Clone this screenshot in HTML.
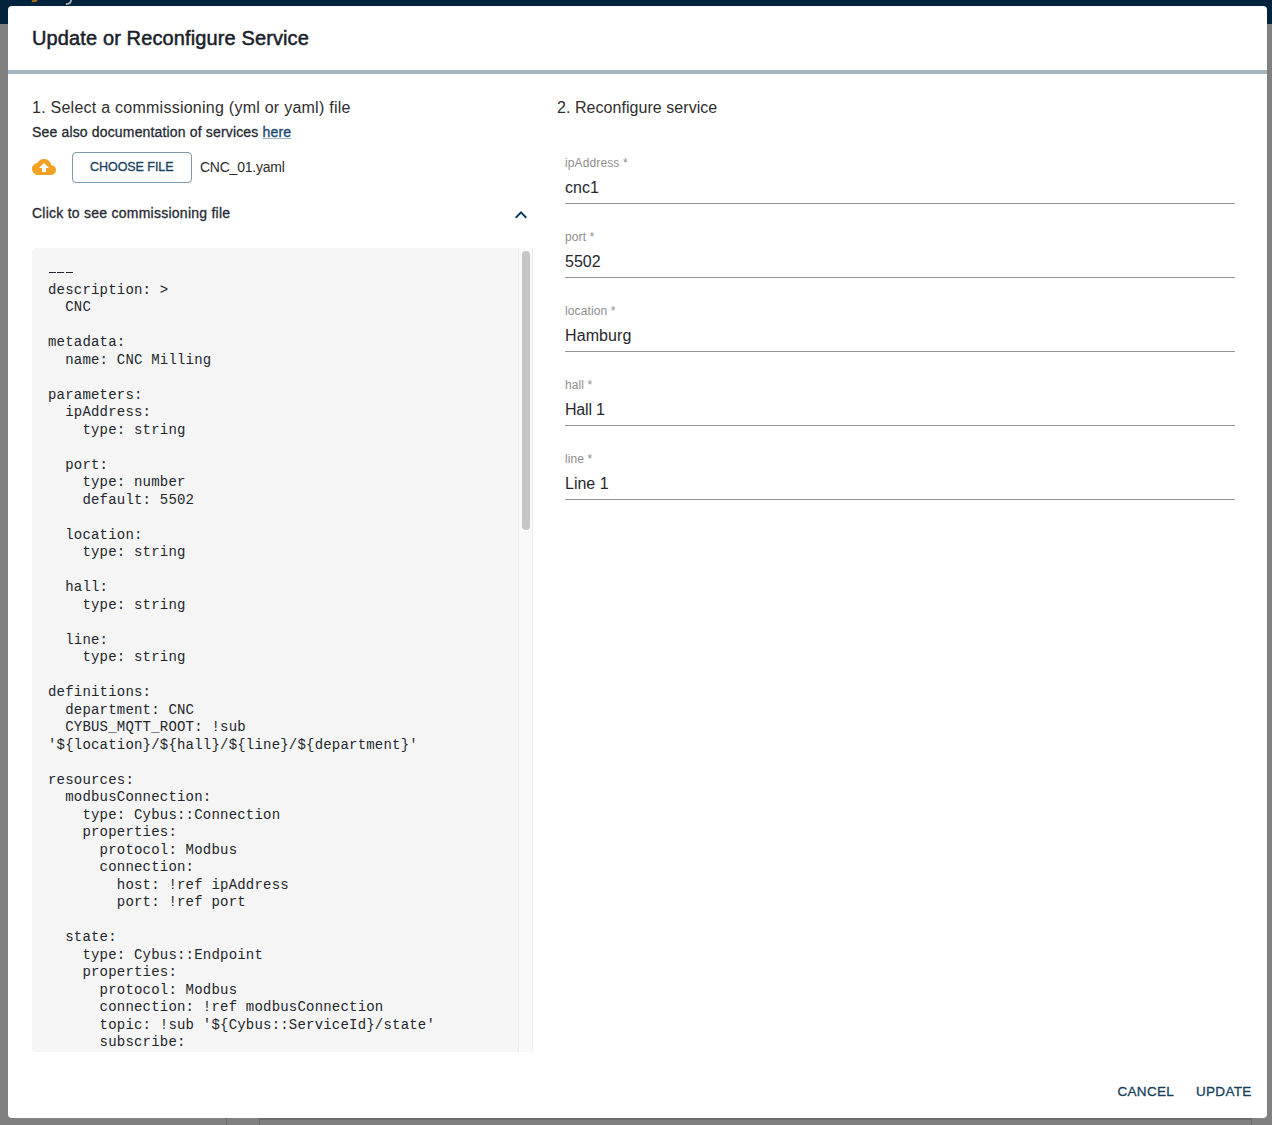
<!DOCTYPE html>
<html><head><meta charset="utf-8">
<style>
*{box-sizing:border-box;margin:0;padding:0}
html,body{width:1272px;height:1125px;overflow:hidden;background:#808080;font-family:"Liberation Sans",sans-serif}
.topbar{position:absolute;left:0;top:0;width:1272px;height:24px;background:#03233d}
.pl{position:absolute;background:#6b6b6b}
.dialog{position:absolute;left:8px;top:6px;width:1259px;height:1112px;background:#fff;border-radius:4px}
.t{position:absolute;white-space:nowrap}
.title{left:24px;top:20px;font-size:20px;color:#1a1e2b;line-height:24px;-webkit-text-stroke:0.5px #1a1e2b;letter-spacing:0.12px}
.divider{position:absolute;left:0;top:64px;width:100%;height:4px;background:#a5b5c2}
.h{font-size:16px;color:#2e2e2e;line-height:20px}
.sub{font-size:14px;color:#262a33;line-height:18px;-webkit-text-stroke:0.3px #262a33}
.sub a{color:#1c4a70;-webkit-text-stroke:0.35px #1c4a70;text-decoration:underline;text-decoration-color:#9fb3c4;text-underline-offset:1px}
.btn{position:absolute;left:64px;top:146px;width:120px;height:31px;border:1px solid #7f99ae;border-radius:4px}
.btn span{position:absolute;left:17px;top:7px;font-size:12.5px;line-height:15px;color:#173f60;-webkit-text-stroke:0.3px #173f60;white-space:nowrap;letter-spacing:-0.05px}
.fname{left:192px;top:152px;font-size:14px;color:#2b2b2b;line-height:18px;letter-spacing:-0.24px}
.code{position:absolute;left:24px;top:242px;width:501px;height:804px;background:#f5f5f5;border-radius:4px 0 0 4px;overflow:hidden}
.code pre{position:absolute;left:16px;top:16px;font-family:"Liberation Mono",monospace;font-size:14px;line-height:17.5px;color:#23262c;letter-spacing:0.2px}
.dash{position:absolute;top:24px;width:7px;height:1px;background:#23262c}
.sb{position:absolute;left:486px;top:0;width:15px;height:804px;background:#f9f9f9;border-left:1px solid #e8e8e8;border-right:1px solid #ededed}
.thumb{position:absolute;left:3px;top:3px;width:8px;height:279px;background:#c6c6c6;border-radius:4px}
.field{position:absolute;left:557px;width:670px;height:60px}
.field .lab{position:absolute;left:0;top:0;font-size:12px;color:#8e8e8e;line-height:14px;white-space:nowrap;letter-spacing:0.12px}
.field .val{position:absolute;left:0;top:22px;font-size:16px;color:#26282d;line-height:20px;white-space:nowrap}
.field .ul{position:absolute;left:0;top:47px;width:670px;height:1px;background:#949494}
.act{top:1078.4px;font-size:13.5px;color:#173f60;-webkit-text-stroke:0.3px #173f60;letter-spacing:0.3px;line-height:16px}
</style></head><body>
<div class="topbar"></div>
<div style="position:absolute;left:32px;top:0;width:5px;height:2px;background:#a86a10;transform:skewX(-30deg)"></div>
<div style="position:absolute;left:66px;top:0;width:6px;height:5px;border-right:2px solid #a8a8a8;border-bottom:2px solid #a8a8a8;border-radius:0 0 5px 0"></div>
<div class="pl" style="left:226px;top:1118px;width:1px;height:7px"></div>
<div class="pl" style="left:259px;top:1118px;width:1px;height:7px"></div>
<div class="pl" style="left:259px;top:1118px;width:993px;height:2px"></div>
<div class="pl" style="left:1251px;top:1118px;width:1px;height:7px"></div>
<div class="dialog">
  <div class="t title">Update or Reconfigure Service</div>
  <div class="divider"></div>
  <div class="t h" style="left:24px;top:92px;letter-spacing:0.25px">1. Select a commissioning (yml or yaml) file</div>
  <div class="t sub" style="left:24px;top:117px;letter-spacing:0.16px">See also documentation of services <a>here</a></div>
  <svg style="position:absolute;left:24px;top:149px" width="24" height="24" viewBox="0 0 24 24"><path fill="#f2a124" d="M19.35 10.04C18.67 6.59 15.64 4 12 4 9.11 4 6.6 5.64 5.35 8.04 2.34 8.36 0 10.91 0 14c0 3.31 2.690 6 6 6h13c2.76 0 5-2.24 5-5 0-2.64-2.05-4.78-4.65-4.96zM14 13v4h-4v-4H7l5-5 5 5h-3z"/></svg>
  <div class="btn"><span>CHOOSE FILE</span></div>
  <div class="t fname">CNC_01.yaml</div>
  <div class="t sub" style="left:24px;top:198px;letter-spacing:0.25px">Click to see commissioning file</div>
  <svg style="position:absolute;left:501px;top:197px" width="24" height="24" viewBox="0 0 24 24"><path fill="#073b60" d="M7.41 15.41L12 10.83l4.59 4.58L18 14l-6-6-6 6z"/></svg>
  <div class="code"><pre>

description: >
  CNC

metadata:
  name: CNC Milling

parameters:
  ipAddress:
    type: string

  port:
    type: number
    default: 5502

  location:
    type: string

  hall:
    type: string

  line:
    type: string

definitions:
  department: CNC
  CYBUS_MQTT_ROOT: !sub
'${location}/${hall}/${line}/${department}'

resources:
  modbusConnection:
    type: Cybus::Connection
    properties:
      protocol: Modbus
      connection:
        host: !ref ipAddress
        port: !ref port

  state:
    type: Cybus::Endpoint
    properties:
      protocol: Modbus
      connection: !ref modbusConnection
      topic: !sub '${Cybus::ServiceId}/state'
      subscribe:
        address: 1
</pre><div class="dash" style="left:17px"></div><div class="dash" style="left:25px"></div><div class="dash" style="left:34px"></div><div class="sb"><div class="thumb"></div></div></div>

  <div class="t h" style="left:549px;top:92px;letter-spacing:0.05px">2. Reconfigure service</div>
  <div class="field" style="top:150px"><div class="lab">ipAddress *</div><div class="val">cnc1</div><div class="ul"></div></div>
  <div class="field" style="top:224px"><div class="lab">port *</div><div class="val">5502</div><div class="ul"></div></div>
  <div class="field" style="top:298px"><div class="lab">location *</div><div class="val" style="letter-spacing:0.1px">Hamburg</div><div class="ul"></div></div>
  <div class="field" style="top:372px"><div class="lab">hall *</div><div class="val" style="letter-spacing:-0.2px">Hall 1</div><div class="ul"></div></div>
  <div class="field" style="top:446px"><div class="lab">line *</div><div class="val">Line 1</div><div class="ul"></div></div>

  <div class="t act" style="left:1109.5px">CANCEL</div>
  <div class="t act" style="left:1188px">UPDATE</div>
</div>
</body></html>
